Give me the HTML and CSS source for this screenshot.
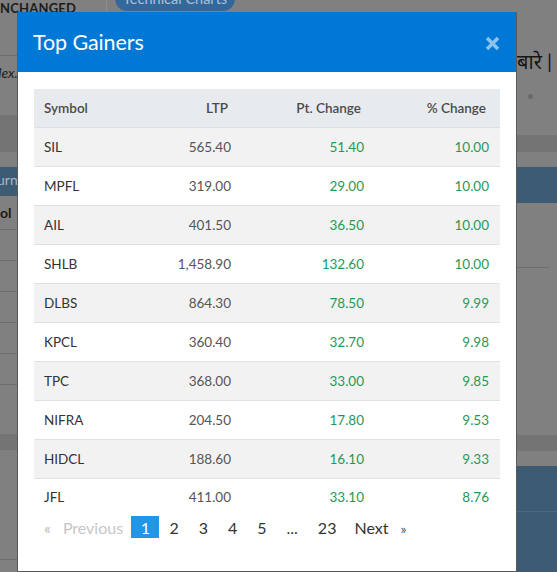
FILE: index.html
```html
<!DOCTYPE html>
<html lang="en">
<head>
<meta charset="utf-8">
<title>Top Gainers</title>
<link rel="stylesheet" href="styles.css">
</head>
<body>
<div class="page">
  <div class="col col-left">
    <div class="top-left">
      <span class="unchanged">NCHANGED</span>
      <span class="divider"></span>
      <span class="pill">Technical Charts</span>
    </div>
    <div class="dex-row"><span class="dex">dex.</span></div>
    <div class="band band-a"></div>
    <div class="blue-bar"><span class="turn">urn</span></div>
    <div class="trow trow-head"><span class="sym">ol</span></div>
    <div class="trow"></div>
    <div class="trow"></div>
    <div class="trow"></div>
    <div class="trow"></div>
    <div class="trow"></div>
    <div class="band band-b"></div>
    <div class="bottom-line"></div>
  </div>
  <div class="col col-right">
    <div class="top-right">
      <span class="about">बारे |</span>
      <span class="dot"></span>
    </div>
    <div class="band band-c"></div>
    <div class="blue-bar blue-right"></div>
    <div class="short-line"></div>
    <div class="band band-d"></div>
    <div class="blue-block"><div class="blue-block-line"></div></div>
  </div>
</div>

<div class="modal">
  <div class="modal-header">
    <h2 class="modal-title">Top Gainers</h2>
    <button class="close" aria-label="Close">
      <svg width="15" height="15" viewBox="0 0 15 15"><path d="M2 2 L13 13 M13 2 L2 13" stroke="#8cc3ee" stroke-width="3.5" fill="none"/></svg>
    </button>
  </div>
  <div class="modal-body">
    <table class="gainers">
      <colgroup>
        <col class="c1"><col class="c2"><col class="c3"><col class="c4">
      </colgroup>
      <thead>
        <tr><th class="left">Symbol</th><th>LTP</th><th>Pt. Change</th><th>% Change</th></tr>
      </thead>
      <tbody>
        <tr><td class="left">SIL</td><td class="ltp">565.40</td><td class="up">51.40</td><td class="up">10.00</td></tr>
        <tr><td class="left">MPFL</td><td class="ltp">319.00</td><td class="up">29.00</td><td class="up">10.00</td></tr>
        <tr><td class="left">AIL</td><td class="ltp">401.50</td><td class="up">36.50</td><td class="up">10.00</td></tr>
        <tr><td class="left">SHLB</td><td class="ltp">1,458.90</td><td class="up">132.60</td><td class="up">10.00</td></tr>
        <tr><td class="left">DLBS</td><td class="ltp">864.30</td><td class="up">78.50</td><td class="up">9.99</td></tr>
        <tr><td class="left">KPCL</td><td class="ltp">360.40</td><td class="up">32.70</td><td class="up">9.98</td></tr>
        <tr><td class="left">TPC</td><td class="ltp">368.00</td><td class="up">33.00</td><td class="up">9.85</td></tr>
        <tr><td class="left">NIFRA</td><td class="ltp">204.50</td><td class="up">17.80</td><td class="up">9.53</td></tr>
        <tr><td class="left">HIDCL</td><td class="ltp">188.60</td><td class="up">16.10</td><td class="up">9.33</td></tr>
        <tr><td class="left">JFL</td><td class="ltp">411.00</td><td class="up">33.10</td><td class="up">8.76</td></tr>
      </tbody>
    </table>
    <nav class="pager">
      <span class="pg prev"><span class="arrow">«</span>Previous</span>
      <span class="pg current">1</span>
      <span class="pg">2</span>
      <span class="pg">3</span>
      <span class="pg">4</span>
      <span class="pg">5</span>
      <span class="pg dots">...</span>
      <span class="pg">23</span>
      <span class="pg next">Next<span class="arrow">»</span></span>
    </nav>
  </div>
</div>
</body>
</html>
```

FILE: styles.css
```css
* { box-sizing: border-box; }

html, body {
  margin: 0;
  padding: 0;
  width: 557px;
  height: 572px;
  overflow: hidden;
  background: #808080;
  font-family: Lato, "Noto Sans", sans-serif;
}

/* ---------- dimmed page behind the modal ---------- */
.page {
  display: grid;
  grid-template-columns: 278px 279px;
  width: 557px;
  height: 572px;
  overflow: hidden;
}

.col { display: flex; flex-direction: column; }

.top-left {
  height: 56px;
  border-bottom: 1px solid #6e6e6e;
  display: flex;
  align-items: flex-start;
}
.unchanged {
  font-weight: 700;
  font-size: 13px;
  color: #1c1c1c;
  line-height: 16px;
  letter-spacing: 0.2px;
}
.divider {
  width: 1px;
  height: 22px;
  background: #8c8c8c;
  margin-left: 30px;
}
.pill {
  margin-left: 8px;
  margin-top: -13px;
  height: 24px;
  padding: 0 8px;
  border-radius: 12px;
  background: #35689a;
  color: #a9c1d9;
  font-size: 14.5px;
  line-height: 24px;
}
.dex-row { height: 59px; padding-top: 6px; }
.dex {
  font-style: italic;
  font-size: 14px;
  color: #222;
  margin-left: -6px;
}
.band { background: #747474; }
.band-a { height: 37px; }
.blue-bar {
  height: 29px;
  margin-top: 15px;
  background: #3e5b74;
  display: flex;
  align-items: center;
}
.turn { color: #a6b8c8; font-size: 14px; margin-left: -3px; margin-top: -4px; }
.trow {
  height: 31px;
  border-bottom: 1px solid #6e6e6e;
}
.trow-head { height: 34px; display: flex; align-items: center; }
.sym { font-weight: 700; font-size: 14px; color: #1a1a1a; }
.band-b { height: 16px; margin-top: 49px; }
.bottom-line { height: 1px; background: #6e6e6e; margin-top: 109px; }

.top-right {
  height: 135px;
  display: flex;
  flex-direction: column;
  align-items: flex-end;
  padding-top: 48px;
}
.about {
  font-size: 20px;
  color: #151515;
  line-height: 26px;
  margin-right: 5px;
}
.dot {
  width: 5px;
  height: 5px;
  border-radius: 50%;
  background: #6a6a6a;
  margin-top: 20px;
  margin-right: 24px;
}
.band-c { height: 17px; }
.blue-right { height: 36px; }
.short-line {
  height: 1px;
  background: #6c6c6c;
  margin: 64px 8px 0 238px;
}
.band-d { height: 16px; margin-top: 167px; }
.blue-block {
  flex: 1;
  margin-top: 15px;
  background: #3e5b74;
  padding-top: 45px;
}
.blue-block-line { height: 1px; background: #4c6a83; }

/* ---------- modal ---------- */
.modal {
  position: absolute;
  left: 17px;
  top: 12px;
  width: 500px;
  height: 560px;
  background: #fff;
  border: 1px solid #5a5a5a;
  border-top: 0;
  display: flex;
  flex-direction: column;
}
.modal-header {
  height: 60px;
  background: #0078d6;
  display: flex;
  align-items: center;
  justify-content: space-between;
  padding: 0 16px 0 15px;
}
.modal-title {
  margin: 0;
  color: #fff;
  font-weight: 400;
  font-size: 21.5px;
  letter-spacing: -0.1px;
  line-height: 1;
  padding-top: 1px;
}
.close {
  background: none;
  border: 0;
  padding: 0;
  width: 15px;
  height: 15px;
  display: block;
  cursor: pointer;
  margin-top: 2px;
}
.close svg { display: block; }

.modal-body {
  padding: 17px 15px 0 16px;
}

.gainers {
  width: 466px;
  border-collapse: collapse;
  table-layout: fixed;
  font-size: 13.5px;
}
.c1 { width: 98px; }
.c2 { width: 110px; }
.c3 { width: 133px; }
.c4 { width: 125px; }

.gainers th {
  height: 38px;
  background: #e8ebee;
  color: #4a4a4a;
  font-weight: 600;
  text-align: right;
  padding: 0 14px 0 10px;
  border-bottom: 1px solid #dcdfe3;
}
.gainers td {
  height: 39px;
  text-align: right;
  padding: 0 11px 0 10px;
  border-bottom: 1px solid #dee1e5;
  color: #555;
}
.gainers tbody tr:nth-child(odd) td { background: #f2f2f2; }
.gainers tbody tr:last-child td { border-bottom: 0; height: 38px; }
.gainers .left { text-align: left; }
.gainers td.left { color: #333; }
.gainers td.up { color: #1f9a55; }

.pager {
  display: flex;
  align-items: flex-start;
  height: 22px;
  font-size: 16px;
  color: #333;
}
.pg {
  display: block;
  line-height: 22px;
  height: 22px;
  padding: 1px 10px 0;
}
.pg.prev { color: #c6c6c6; padding-left: 10px; padding-right: 8px; }
.prev .arrow { color: #b8b8b8; margin-right: 12px; }
.pg.current {
  background: #2196e6;
  color: #fff;
  padding: 1px 9.5px 0;
}
.pg.dots { padding: 1px 10px 0; }
.pg.next { padding-left: 8px; }
.next .arrow { color: #555; margin-left: 12px; font-size: 14px; }
```
